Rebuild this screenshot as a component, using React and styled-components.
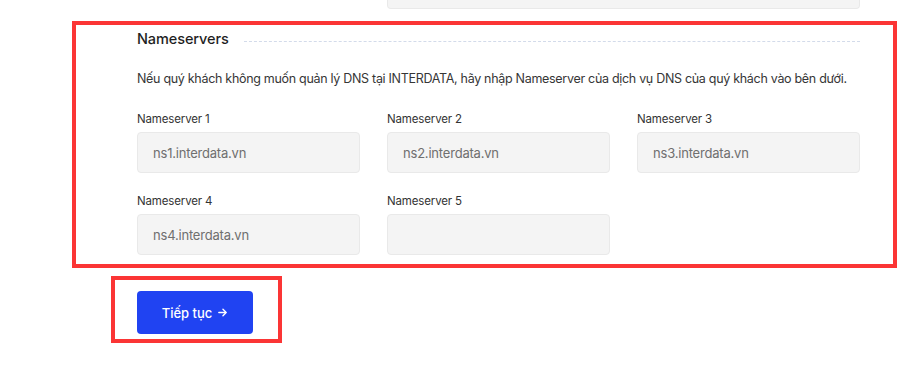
import React from 'react';
import styled, { createGlobalStyle } from 'styled-components';

const GlobalStyle = createGlobalStyle`
  html, body {
    margin: 0;
    padding: 0;
    background: #fff;
  }
  body {
    font-family: Inter, "Noto Sans", "Liberation Sans", sans-serif;
    color: #2b2b2b;
  }
`;

const Page = styled.div`
  width: 916px;
  height: 391px;
  overflow: hidden;
`;

const PrevRow = styled.div`
  display: grid;
  grid-template-columns: repeat(3, 223px);
  column-gap: 27px;
  padding-left: 137px;
  height: 9px;
`;

const PrevInput = styled.div`
  grid-column: 2 / 4;
  height: 9px;
  box-sizing: border-box;
  background: #f4f4f4;
  border: 1px solid #e9e9e9;
  border-top: none;
  border-radius: 0 0 4px 4px;
`;

const Highlight = styled.div`
  box-sizing: border-box;
  border: 4px solid #fb3535;
`;

const Section = styled(Highlight)`
  margin: 12px 0 0 72px;
  width: 825px;
  padding: 4px 33px 9px 61px;
`;

const TitleRow = styled.div`
  display: flex;
  align-items: center;
  gap: 15px;
  height: 20px;
`;

const Title = styled.h3`
  margin: 0;
  font-size: 14.5px;
  font-weight: 500;
  color: #1f1f1f;
  line-height: 20px;
  letter-spacing: -0.1px;
`;

const Dashes = styled.div`
  flex: 1;
  margin-top: 4px;
  border-top: 1px dashed #d3dbea;
`;

const Note = styled.p`
  margin: 20px 0 0;
  font-size: 12.5px;
  line-height: 20px;
  color: #363636;
  letter-spacing: -0.3px;
  white-space: nowrap;
`;

const Grid = styled.div`
  display: grid;
  grid-template-columns: repeat(3, 223px);
  column-gap: 27px;
  row-gap: 20px;
  margin-top: 22px;
`;

const Field = styled.div`
  display: flex;
  flex-direction: column;
  gap: 5px;
`;

const Label = styled.label`
  font-size: 11.5px;
  line-height: 16px;
  color: #333;
  letter-spacing: -0.15px;
`;

const Input = styled.input`
  box-sizing: border-box;
  height: 41px;
  width: 100%;
  padding: 0 15px;
  background: #f4f4f4;
  border: 1px solid #e9e9e9;
  border-radius: 4px;
  font-family: inherit;
  font-size: 13px;
  letter-spacing: -0.2px;
  color: #6f6f6f;
  outline: none;
`;

const ButtonWrap = styled(Highlight)`
  margin: 8px 0 0 111px;
  width: 171px;
  height: 67px;
  padding: 11px 0 0 22px;
`;

const NextButton = styled.button`
  display: flex;
  align-items: center;
  justify-content: center;
  gap: 5px;
  width: 116px;
  height: 43px;
  border: none;
  border-radius: 4px;
  background: #2043f2;
  color: #fff;
  font-family: inherit;
  font-size: 13px;
  font-weight: 500;
  cursor: pointer;
`;

const servers = ['ns1.interdata.vn', 'ns2.interdata.vn', 'ns3.interdata.vn', 'ns4.interdata.vn', ''];

const Arrow = () => (
  <svg width="11" height="11" viewBox="0 0 24 24" fill="none" stroke="currentColor" strokeWidth="3" strokeLinecap="round" strokeLinejoin="round">
    <path d="M4 12h15" />
    <path d="M13 5l7 7-7 7" />
  </svg>
);

export default function App() {
  return (
    <Page>
      <GlobalStyle />
      <PrevRow>
        <PrevInput />
      </PrevRow>
      <Section>
        <TitleRow>
          <Title>Nameservers</Title>
          <Dashes />
        </TitleRow>
        <Note>
          Nếu quý khách không muốn quản lý DNS tại INTERDATA, hãy nhập Nameserver của dịch vụ DNS của quý khách vào bên dưới.
        </Note>
        <Grid>
          {servers.map((value, i) => (
            <Field key={i}>
              <Label>Nameserver {i + 1}</Label>
              <Input defaultValue={value} />
            </Field>
          ))}
        </Grid>
      </Section>
      <ButtonWrap>
        <NextButton>
          Tiếp tục <Arrow />
        </NextButton>
      </ButtonWrap>
    </Page>
  );
}
